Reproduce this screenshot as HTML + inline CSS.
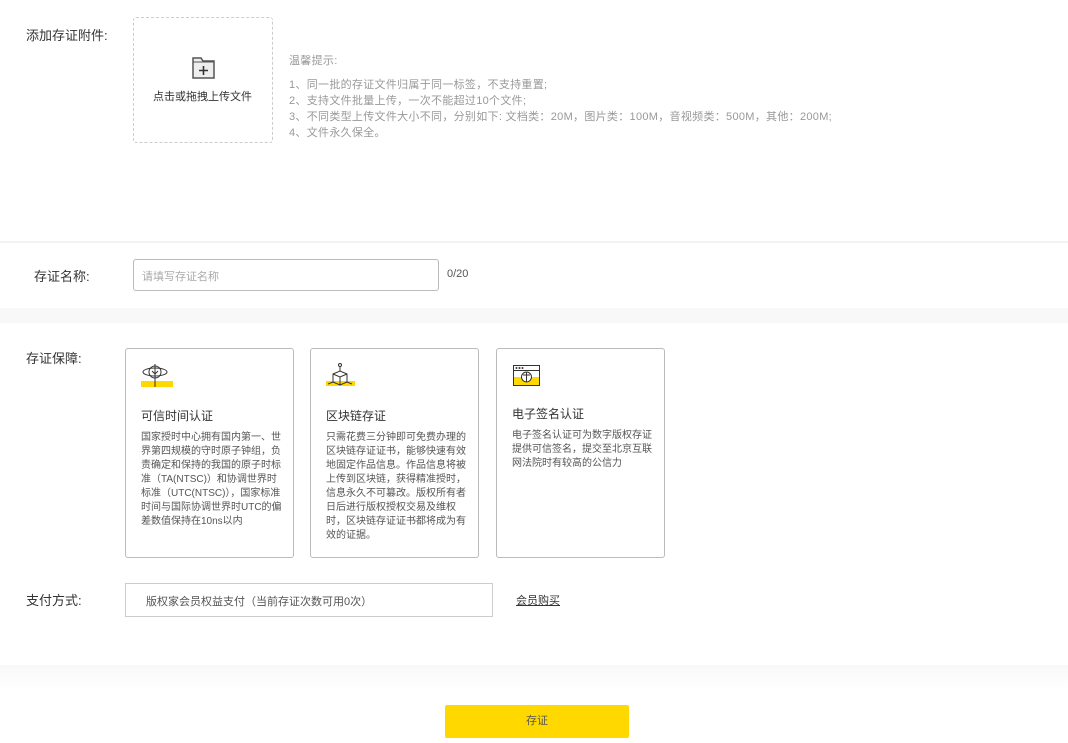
<!DOCTYPE html>
<html><head><meta charset="utf-8"><style>
*{margin:0;padding:0;box-sizing:border-box}
body{width:1068px;height:743px;background:#fff;font-family:"Liberation Sans","Noto Sans CJK SC",sans-serif;position:relative;overflow:hidden;color:#333}
.abs{position:absolute}
.lbl{font-size:13px;color:#333}
.tip{font-size:11px;color:#999;line-height:16px;letter-spacing:0.3px}
.box{position:absolute;border:1px solid #bbb;border-radius:3px;background:#fff;width:169px;height:210px;top:348px}
.box h4{position:absolute;left:15px;top:58px;font-size:12px;font-weight:normal;color:#333}
.box p{position:absolute;left:15px;top:82px;width:142px;font-size:10px;line-height:14px;color:#555}
.box svg{position:absolute;left:15px;top:14px}
</style></head><body>
<div class="abs" style="left:0;right:0;top:241px;height:2px;background:#f3f3f3"></div>
<div class="abs" style="left:0;right:0;top:308px;height:15px;background:#f8f8f8"></div>
<div class="abs" style="left:0;right:0;top:665px;height:25px;background:linear-gradient(#f8f8f8,#fff)"></div>

<div class="abs lbl" style="left:26px;top:25px">添加存证附件:</div>
<div class="abs" style="left:133px;top:17px;width:140px;height:126px;border:1px dashed #ccc;border-radius:3px"></div>
<svg class="abs" style="left:191px;top:56px" width="26" height="24" viewBox="0 0 26 24"><path d="M2 2h8l2 3h11v17H2z" fill="#eee" stroke="#555" stroke-width="1.5"/><path d="M2 6h21" stroke="#555" stroke-width="1"/><path d="M12.5 10v9M8 14.5h9" stroke="#333" stroke-width="1.6"/></svg>
<div class="abs" style="left:153px;top:88px;font-size:11px;color:#333">点击或拖拽上传文件</div>
<div class="abs tip" style="left:289px;top:53px">温馨提示:</div>
<div class="abs tip" style="left:289px;top:77px">1、同一批的存证文件归属于同一标签，不支持重置;<br>2、支持文件批量上传，一次不能超过10个文件;<br>3、不同类型上传文件大小不同，分别如下: 文档类：20M，图片类：100M，音视频类：500M，其他：200M;<br>4、文件永久保全。</div>

<div class="abs lbl" style="left:34px;top:266px">存证名称:</div>
<div class="abs" style="left:133px;top:259px;width:306px;height:32px;border:1px solid #bbb;border-radius:3px;font-size:11px;color:#aaa;padding:8px 8px">请填写存证名称</div>
<div class="abs" style="left:447px;top:268px;font-size:11px;color:#555">0/20</div>

<div class="abs lbl" style="left:26px;top:348px">存证保障:</div>
<div class="box" style="left:125px">
<svg width="34" height="26" viewBox="0 0 34 26"><rect x="0" y="18" width="32" height="6" fill="#ffd800"/><ellipse cx="14" cy="9" rx="12" ry="4" fill="none" stroke="#333" stroke-width="1"/><circle cx="14" cy="9" r="6" fill="none" stroke="#333"/><path d="M14 1v23M11 8l3 3 3-3" stroke="#333" fill="none"/></svg>
<h4>可信时间认证</h4>
<p>国家授时中心拥有国内第一、世界第四规模的守时原子钟组，负责确定和保持的我国的原子时标准（TA(NTSC)）和协调世界时标准（UTC(NTSC)），国家标准时间与国际协调世界时UTC的偏差数值保持在10ns以内</p></div>
<div class="box" style="left:310px">
<svg width="34" height="26" viewBox="0 0 34 26"><rect x="0" y="18" width="29" height="5" fill="#ffd800"/><circle cx="14" cy="2" r="1.5" fill="none" stroke="#333"/><path d="M14 4v4M7 11l7-3 7 3v8l-7 3-7-3zM7 11l7 3 7-3M14 14v8M7 19l-5 2M21 19l5 2" stroke="#333" fill="none"/></svg>
<h4>区块链存证</h4>
<p>只需花费三分钟即可免费办理的区块链存证证书，能够快速有效地固定作品信息。作品信息将被上传到区块链，获得精准授时，信息永久不可篡改。版权所有者日后进行版权授权交易及维权时，区块链存证证书都将成为有效的证据。</p></div>
<div class="box" style="left:496px">
<svg width="34" height="26" viewBox="0 0 34 26"><rect x="1" y="14" width="27" height="9" fill="#ffd800"/><rect x="1.5" y="2.5" width="26" height="20" fill="none" stroke="#333"/><path d="M1.5 7.5h26" stroke="#333"/><circle cx="4.5" cy="5" r="1" fill="#333"/><circle cx="7.5" cy="5" r="1" fill="#333"/><circle cx="10.5" cy="5" r="1" fill="#333"/><circle cx="14.5" cy="14" r="5" fill="#fff" stroke="#333"/><path d="M11 12h7M14.5 9v10" stroke="#333"/></svg>
<h4 style="top:56px">电子签名认证</h4>
<p style="top:80px">电子签名认证可为数字版权存证提供可信签名，提交至北京互联网法院时有较高的公信力</p></div>

<div class="abs lbl" style="left:26px;top:590px">支付方式:</div>
<div class="abs" style="left:125px;top:583px;width:368px;height:34px;border:1px solid #ccc;font-size:11px;color:#555;padding:9px 20px">版权家会员权益支付（当前存证次数可用0次）</div>
<div class="abs" style="left:516px;top:592px;font-size:11px;color:#333;text-decoration:underline">会员购买</div>

<div class="abs" style="left:445px;top:705px;width:184px;height:33px;background:#ffd800;border-radius:2px;font-size:11px;color:#555;text-align:center;line-height:33px">存证</div>
</body></html>
